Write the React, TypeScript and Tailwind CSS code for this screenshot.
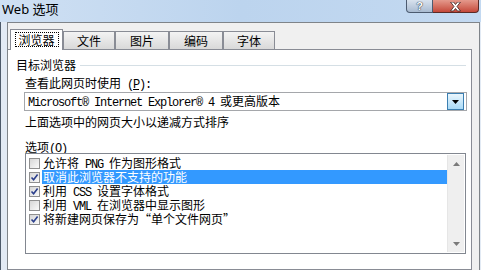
import React from "react";

const ASCII = /^[\x20-\x7e\u00ae]+$/;
const mono =
  "whitespace-pre font-['Liberation_Mono',monospace] text-[12px] tracking-[-1.2px]";

// SimSun-like mix: half-width latin runs in a mono face, CJK in full width
function Sim({ text }: { text: string }) {
  const parts = text.split(/([\x20-\x7e\u00ae]+)/).filter(Boolean);
  return (
    <>
      {parts.map((p, i) =>
        ASCII.test(p) ? (
          <span key={i} className={mono}>
            {p}
          </span>
        ) : (
          <span key={i}>{p}</span>
        ),
      )}
    </>
  );
}

function CheckBox({ checked }: { checked: boolean }) {
  return (
    <div className="flex h-[11px] w-[11px] shrink-0 items-center justify-center border border-[#8f8f8f] bg-gradient-to-br from-[#d6d6d6] to-[#fafafa]">
      {checked ? (
        <svg width="9" height="9" viewBox="0 0 9 9">
          <path
            d="M1.5 4.5 L3.6 6.8 L7.6 1.6"
            fill="none"
            stroke="#2b3f8c"
            strokeWidth="1.6"
          />
        </svg>
      ) : null}
    </div>
  );
}

const tabs = [
  { label: "文件", w: "w-[52px]" },
  { label: "图片", w: "w-[54px]" },
  { label: "编码", w: "w-[54px]" },
  { label: "字体", w: "w-[52px]" },
];

const options = [
  { label: "允许将 PNG 作为图形格式", checked: false, selected: false },
  { label: "取消此浏览器不支持的功能", checked: true, selected: true },
  { label: "利用 CSS 设置字体格式", checked: true, selected: false },
  { label: "利用 VML 在浏览器中显示图形", checked: false, selected: false },
  { label: "将新建网页保存为“单个文件网页”", checked: true, selected: false },
];

export default function App() {
  return (
    <div className="flex h-[270px] w-[481px] flex-col overflow-hidden bg-[#e2eaf4] text-[12px] text-black font-['Noto_Sans_CJK_SC','Noto_Sans',sans-serif]">
      {/* title bar */}
      <div className="flex h-[22px] shrink-0 bg-gradient-to-r from-[#cfe0f3] via-[#bcd4ee] to-[#c3d9f1]">
        <span className="pl-[2px] pt-[1px] text-[13px] leading-[16px] font-['Noto_Sans','Noto_Sans_CJK_SC',sans-serif]">
          Web 选项
        </span>
        <div className="ml-auto mr-[2px] flex h-[13px]">
          <div className="flex w-[27px] items-end justify-center rounded-bl-[4px] border border-t-0 border-[#4c5b70] bg-gradient-to-b from-[#d8e2ee] to-[#a9bbd1] text-[11px] leading-[11px] font-bold text-white font-['Liberation_Sans',sans-serif] [text-shadow:0_0_1px_#1c2a3c,0_0_1px_#1c2a3c]">
            ?
          </div>
          <div className="flex w-[46px] items-end justify-center rounded-br-[4px] border border-l-0 border-t-0 border-[#5b2a26] bg-gradient-to-b from-[#e4998c] to-[#c4473a]">
            <svg width="13" height="10" viewBox="0 0 13 10">
              <path
                d="M1.5 0 L4.5 0 L6.5 2.5 L8.5 0 L11.5 0 L8 4.5 L11.5 9 L8.5 9 L6.5 6.5 L4.5 9 L1.5 9 L5 4.5 Z"
                fill="#ffffff"
                stroke="#3a2020"
                strokeWidth="0.8"
              />
            </svg>
          </div>
        </div>
      </div>

      {/* window body */}
      <div className="flex flex-1 border-l border-[#4d5a6a]">
        <div className="w-[6px] shrink-0" />
        <div className="mr-[1px] flex flex-1 flex-col border-l border-r border-t border-[#7f8489] bg-[#f0f0f0]">
          {/* tabs */}
          <div className="mt-[6px] flex h-[20px] items-end pl-[2px]">
            <div className="relative z-10 -mb-px flex h-[21px] w-[53px] items-start justify-center border border-b-0 border-[#898c95] bg-white pt-[2px]">
              <div className="flex h-[15px] w-[44px] items-center justify-center border border-dotted border-black leading-[13px]">
                浏览器
              </div>
            </div>
            {tabs.map((t) => (
              <div
                key={t.label}
                className={`flex h-[18px] ${t.w} items-center justify-center border border-b-0 border-[#898c95] bg-gradient-to-b from-[#f3f3f3] to-[#d9d9d9] leading-[16px]`}
              >
                {t.label}
              </div>
            ))}
          </div>

          {/* tab page */}
          <div className="mr-[7px] flex flex-1 flex-col border-b border-r border-t border-[#898c95] bg-white">
            <div className="mt-[7px] flex h-[16px] items-center pl-[8px] leading-[16px]">
              <span>目标浏览器</span>
              <div className="ml-[4px] mr-[5px] h-px flex-1 bg-[#d5dfe5]" />
            </div>

            <div className="mt-[2px] h-[16px] pl-[17px] leading-[16px]">
              <span>查看此网页时使用</span>
              <span className={mono}>
                {" ("}
                <span className="underline">P</span>
                {"):"}
              </span>
            </div>

            <div className="ml-[16px] mt-[1px] flex h-[19px] w-[443px] items-center border border-[#a5a7ab] bg-white pl-[3px] pr-[2px] leading-[16px]">
              <span className="flex-1">
                <Sim text="Microsoft® Internet Explorer® 4 或更高版本" />
              </span>
              <div className="flex h-[17px] w-[17px] items-center justify-center border border-[#3c7fb1] bg-gradient-to-b from-[#eaf6fd] to-[#a9daf6]">
                <svg width="7" height="4" viewBox="0 0 7 4">
                  <path d="M0 0 L7 0 L3.5 4 Z" fill="#000" />
                </svg>
              </div>
            </div>

            <div className="mt-[3px] h-[16px] pl-[17px] leading-[16px]">
              上面选项中的网页大小以递减方式排序
            </div>

            <div className="mt-[11px] h-[12px] pl-[17px] leading-[12px]">
              <span>选项</span>
              <span className={mono}>
                {"("}
                <span className="underline">O</span>
                {")"}
              </span>
            </div>

            <div className="ml-[17px] flex h-[101px] w-[441px] border border-[#828790] bg-white py-px">
              <div className="flex flex-1 flex-col pt-px">
                {options.map((o) => (
                  <div key={o.label} className="flex h-[14px] items-center pl-[3px]">
                    <CheckBox checked={o.checked} />
                    <div
                      className={`ml-[2px] h-[14px] flex-1 whitespace-nowrap pl-px leading-[14px] ${
                        o.selected ? "bg-[#3399ff] text-white" : ""
                      }`}
                    >
                      <Sim text={o.label} />
                    </div>
                  </div>
                ))}
              </div>
              <div className="mr-px flex w-[17px] flex-col items-center justify-between border-l border-[#e6e6e6] bg-[#efefef] pb-[6px] pt-[7px]">
                <svg width="7" height="4" viewBox="0 0 7 4">
                  <path d="M3.5 0 L7 4 L0 4 Z" fill="#7a7a7a" />
                </svg>
                <svg width="7" height="4" viewBox="0 0 7 4">
                  <path d="M0 0 L7 0 L3.5 4 Z" fill="#7a7a7a" />
                </svg>
              </div>
            </div>
          </div>
        </div>
      </div>
    </div>
  );
}
